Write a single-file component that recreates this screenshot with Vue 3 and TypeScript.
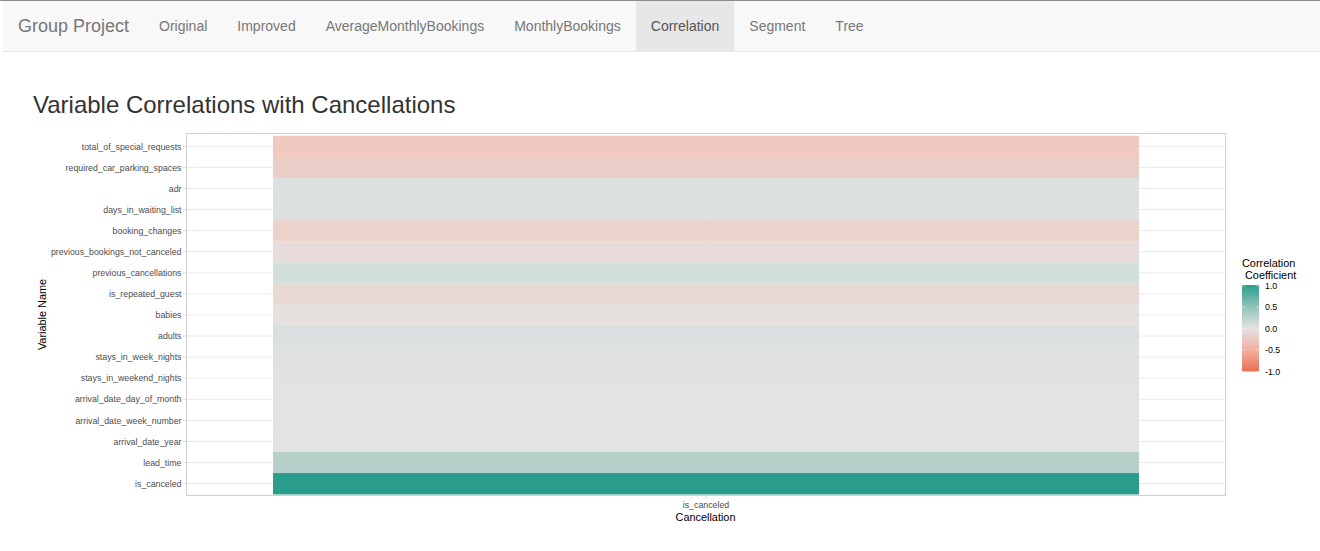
<script setup lang="ts">
interface Row { name: string; color: string }
const navItems: string[] = ['Original', 'Improved', 'AverageMonthlyBookings', 'MonthlyBookings', 'Correlation', 'Segment', 'Tree']
const rows: Row[] = [
  { name: 'total_of_special_requests', color: '#f0c9c1' },
  { name: 'required_car_parking_spaces', color: '#eccec8' },
  { name: 'adr', color: '#dce0de' },
  { name: 'days_in_waiting_list', color: '#dce0de' },
  { name: 'booking_changes', color: '#ebd3cc' },
  { name: 'previous_bookings_not_canceled', color: '#e7dcd9' },
  { name: 'previous_cancellations', color: '#d2dfdb' },
  { name: 'is_repeated_guest', color: '#e9d9d5' },
  { name: 'babies', color: '#e6e0df' },
  { name: 'adults', color: '#d9e0df' },
  { name: 'stays_in_week_nights', color: '#dfe2e1' },
  { name: 'stays_in_weekend_nights', color: '#e3e2e2' },
  { name: 'arrival_date_day_of_month', color: '#e4e2e2' },
  { name: 'arrival_date_week_number', color: '#e4e2e2' },
  { name: 'arrival_date_year', color: '#e3e3e2' },
  { name: 'lead_time', color: '#b5cfc9' },
  { name: 'is_canceled', color: '#2a9d8c' }
]
const step = 21.08
const rowY = (i: number): number => 146.32 + i * step
const legendTicks = [
  { label: '1.0', y: 286 },
  { label: '0.5', y: 307.2 },
  { label: '0.0', y: 328.6 },
  { label: '-0.5', y: 350 },
  { label: '-1.0', y: 371.5 }
]
</script>

<template>
  <div class="page">
    <nav class="navbar">
      <a class="brand">Group Project</a>
      <ul class="nav">
        <li v-for="item in navItems" :key="item" :class="{ active: item === 'Correlation' }">{{ item }}</li>
      </ul>
    </nav>
    <main class="content">
      <h2 class="title">Variable Correlations with Cancellations</h2>
      <svg class="plot" width="1320" height="416" viewBox="0 120 1320 416" role="img">
        <defs>
          <linearGradient id="legend-grad" x1="0" y1="0" x2="0" y2="1">
            <stop offset="0" stop-color="#2a9d8c" />
            <stop offset="0.25" stop-color="#8fc2b8" />
            <stop offset="0.5" stop-color="#e3e2e2" />
            <stop offset="0.75" stop-color="#f2b0a0" />
            <stop offset="1" stop-color="#e76f51" />
          </linearGradient>
        </defs>
        <line v-for="(r, i) in rows" :key="'g' + r.name" x1="186" x2="1226" :y1="rowY(i)" :y2="rowY(i)" stroke="#ebebeb" stroke-width="1" />
        <line x1="706" x2="706" y1="133" y2="496" stroke="#ebebeb" stroke-width="1" />
        <rect v-for="(r, i) in rows" :key="'t' + r.name" x="273" width="866" :y="rowY(i) - step / 2" :height="step + 0.3" :fill="r.color" />
        <rect x="186.5" y="133.5" width="1039" height="362" fill="none" stroke="#cfcfcf" stroke-width="1" />
        <g v-for="(r, i) in rows" :key="'l' + r.name">
          <line x1="183" x2="186" :y1="rowY(i)" :y2="rowY(i)" stroke="#d8d8d8" stroke-width="1" />
          <text x="181.5" :y="rowY(i) + 3.2" text-anchor="end" class="axis-text">{{ r.name }}</text>
        </g>
        <line x1="706" x2="706" y1="496" y2="499" stroke="#d8d8d8" stroke-width="1" />
        <text x="706" y="508" text-anchor="middle" class="axis-text">is_canceled</text>
        <text x="705.5" y="521" text-anchor="middle" class="axis-title">Cancellation</text>
        <text transform="translate(46 314.5) rotate(-90)" text-anchor="middle" class="axis-title">Variable Name</text>
        <text x="1242" y="267" class="axis-title">Correlation</text>
        <text x="1245" y="279" class="axis-title">Coefficient</text>
        <rect x="1242" y="285" width="17" height="86.5" fill="url(#legend-grad)" />
        <g v-for="t in legendTicks" :key="t.label">
          <line x1="1242" x2="1245.5" :y1="t.y" :y2="t.y" stroke="#fff" stroke-opacity="0.45" />
          <line x1="1255.5" x2="1259" :y1="t.y" :y2="t.y" stroke="#fff" stroke-opacity="0.45" />
          <text x="1265" :y="t.y + 3" class="legend-text">{{ t.label }}</text>
        </g>
      </svg>
    </main>
  </div>
</template>

<style scoped>
.page {
  font-family: "Liberation Sans", Arial, sans-serif;
  border-top: 1px solid #8c8c8c;
  height: 550px;
  overflow: hidden;
  background: #fff;
}
.navbar {
  display: flex;
  margin-left: 3px;
  height: 50px;
  background: #f8f8f8;
  border-bottom: 1px solid #e7e7e7;
}
.brand {
  padding: 15px;
  font-size: 18px;
  line-height: 20px;
  color: #777;
}
.nav {
  display: flex;
  list-style: none;
  margin: 0;
  padding: 0;
}
.nav li {
  padding: 15px;
  font-size: 14px;
  line-height: 20px;
  color: #777;
}
.nav li.active {
  background: #e7e7e7;
  color: #555;
}
.content {
  display: flex;
  flex-direction: column;
}
.title {
  margin: 40px 0 0 33px;
  font-size: 24px;
  font-weight: 400;
  line-height: 26px;
  color: #333;
}
.plot {
  display: block;
  margin-top: 2px;
}
.axis-text {
  font-size: 8.8px;
  fill: #4d4d4d;
}
.axis-title {
  font-size: 10.9px;
  fill: #000;
}
.legend-text {
  font-size: 8.8px;
  fill: #000;
}
</style>
